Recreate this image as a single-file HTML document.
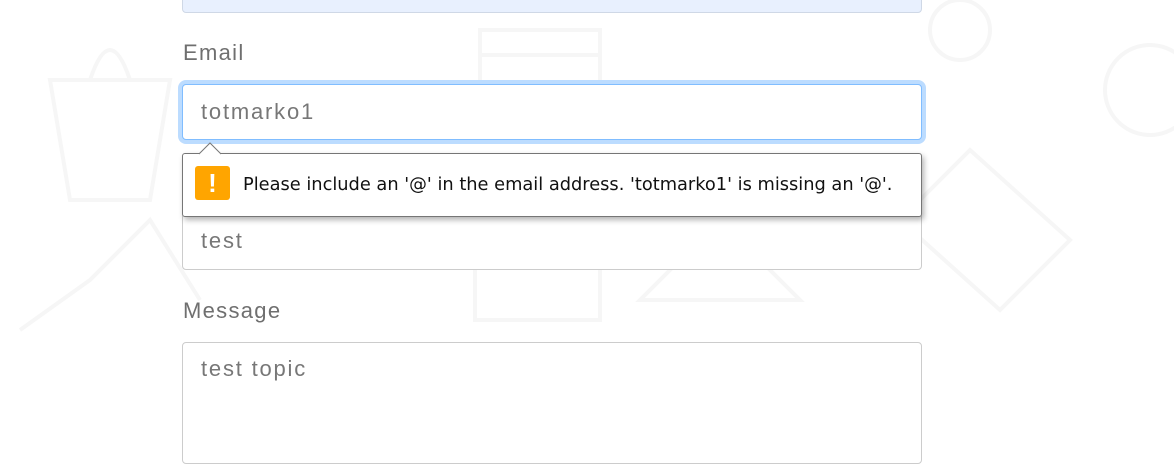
<!DOCTYPE html><html><head><style>
body{margin:0;width:1174px;height:442px;background:#fff;position:relative;overflow:hidden;font-family:"Liberation Sans",sans-serif}
.box{position:absolute;left:182px;width:738px;border:1px solid #ccc;border-radius:4px;background:#fff}
.lbl{position:absolute;left:183px;font-size:22px;color:#6f6f6f;letter-spacing:1.3px}
.val{position:absolute;left:201px;font-size:22px;color:#777;letter-spacing:1.8px}
</style></head><body>
<svg style="position:absolute;left:0;top:0" width="1174" height="442" fill="none" stroke="#f6f6f6" stroke-width="4">
<path d="M50 80 L70 200 L150 200 L170 80 Z M90 80 Q110 20 130 80"/>
<path d="M480 30 L600 30 L600 90 L480 90 Z M480 55 L600 55"/>
<path d="M640 300 L720 220 L800 300 Z"/>
<path d="M900 220 L970 150 L1070 240 L1000 310 Z"/>
<circle cx="1150" cy="90" r="45"/><circle cx="960" cy="30" r="30"/>
<path d="M20 330 L90 280 L150 220 L200 300"/>
<path d="M475 260 L600 260 L600 320 L475 320 Z"/>
</svg>
<div class="box" style="top:-5px;height:16px;background:#e8f0fe;border-color:#cfd8e6"></div>
<div class="lbl" style="top:40px">Email</div>
<div class="box" style="top:84px;height:54px;border-color:#80bdff;box-shadow:0 0 0 4px #bcdcff"></div>
<div class="val" style="top:99px">totmarko1</div>
<div class="box" style="top:213px;height:55px"></div>
<div class="val" style="top:228px">test</div>
<div class="lbl" style="top:298px">Message</div>
<div class="box" style="top:342px;height:120px"></div>
<div class="val" style="top:356px">test topic</div>
<div style="position:absolute;left:182px;top:153px;width:738px;height:62px;border:1px solid #767676;border-radius:3px;background:#fff;box-shadow:2px 3px 6px rgba(0,0,0,.3)"></div>
<svg style="position:absolute;left:199px;top:142px" width="24" height="13"><path d="M0 12 L11 1 L22 12" fill="#fff" stroke="#767676"/></svg>
<div style="position:absolute;left:195px;top:166px;width:35px;height:34px;background:#ffa500;border-radius:3px;color:#fff;font-weight:bold;font-size:26px;text-align:center;line-height:34px">!</div>
<div style="position:absolute;left:243px;top:174px;color:#111;font-family:'DejaVu Sans','Liberation Sans',sans-serif;font-size:17.8px">Please include an '@' in the email address. 'totmarko1' is missing an '@'.</div>
</body></html>
